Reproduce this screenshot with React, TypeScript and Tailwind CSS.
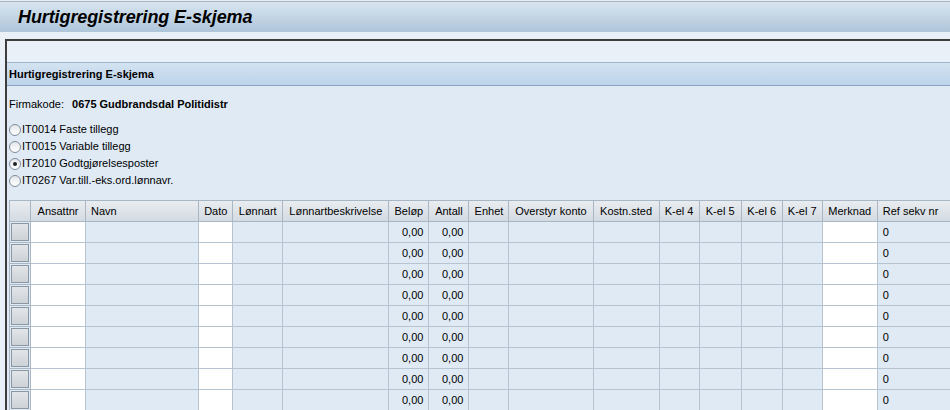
import React from "react";

const columns: { label: string; w: number; white?: boolean; num?: boolean; zero?: boolean }[] = [
  { label: "Ansattnr", w: 55, white: true },
  { label: "Navn", w: 113 },
  { label: "Dato", w: 34, white: true },
  { label: "Lønnart", w: 50 },
  { label: "Lønnartbeskrivelse", w: 106 },
  { label: "Beløp", w: 40, num: true },
  { label: "Antall", w: 40, num: true },
  { label: "Enhet", w: 40 },
  { label: "Overstyr konto", w: 84 },
  { label: "Kostn.sted", w: 66 },
  { label: "K-el 4", w: 40 },
  { label: "K-el 5", w: 42 },
  { label: "K-el 6", w: 41 },
  { label: "K-el 7", w: 40 },
  { label: "Merknad", w: 55, white: true },
  { label: "Ref sekv nr", w: 80, zero: true },
];

const options = [
  { id: "IT0014", text: "IT0014 Faste tillegg" },
  { id: "IT0015", text: "IT0015 Variable tillegg" },
  { id: "IT2010", text: "IT2010 Godtgjørelsesposter" },
  { id: "IT0267", text: "IT0267 Var.till.-eks.ord.lønnavr." },
];

const rows = Array.from({ length: 9 }, (_, i) => i);

const Radio: React.FC<{ checked?: boolean }> = ({ checked }) => (
  <span className="flex h-[12px] w-[12px] items-center justify-center rounded-full border border-[#7f8d9a] bg-gradient-to-b from-[#e3e6ea] to-white">
    {checked && <span className="h-[4px] w-[4px] rounded-full bg-[#222]" />}
  </span>
);

export default function App() {
  return (
    <div
      className="h-[410px] w-[950px] overflow-hidden bg-[#e9f0f7] text-[11px] text-black"
      style={{ fontFamily: "Tahoma, 'Liberation Sans', Arial, sans-serif" }}
    >
      {/* title bar */}
      <div className="border-t border-[#e9eef3] bg-[#e9eef3]">
        <div className="flex h-[31px] items-center border-t border-[#a9b4c0] bg-gradient-to-b from-[#d8e5f0] to-[#aec5da] pl-[18px]">
          <h1 className="text-[18px] font-bold italic tracking-[-0.1px] text-black">
            Hurtigregistrering E-skjema
          </h1>
        </div>
      </div>

      <div className="h-[7px] bg-[#e9f0f7]" />

      {/* frame */}
      <div className="ml-[5px] border-l-2 border-t-2 border-[#3d3d3d]">
        <div className="h-[21px] bg-[#e9f0f7]" />
        <div className="flex h-[24px] items-center border-y border-t-[#9db4cb] border-b-[#87a2c0] bg-gradient-to-b from-[#d3e3f1] to-[#bdd4ea] pl-[2px] font-bold">
          Hurtigregistrering E-skjema
        </div>

        <div className="bg-[#dfeaf5] pl-[2px] pt-[11px]">
          <div className="flex h-[14px] items-center">
            <span>Firmakode:</span>
            <span className="ml-[8px] font-bold">0675 Gudbrandsdal Politidistr</span>
          </div>

          <div className="mt-[12px] flex flex-col gap-[4px]">
            {options.map((o) => (
              <label key={o.id} className="flex h-[13px] items-center gap-[1px]">
                <Radio checked={o.id === "IT2010"} />
                <span>{o.text}</span>
              </label>
            ))}
          </div>

          <table className="mt-[13px] w-[949px] min-w-[949px] table-fixed border-separate border-spacing-0">
            <thead>
              <tr className="h-[22px]">
                <th className="w-[22px] border-y border-l border-r border-[#a9b6c3] bg-gradient-to-b from-[#e9edf1] to-[#d3dae1]" />
                {columns.map((c) => (
                  <th
                    key={c.label}
                    style={{ width: c.w }}
                    className="whitespace-nowrap border-y border-r border-[#a9b6c3] bg-gradient-to-b from-[#e9edf1] to-[#d3dae1] px-[5px] text-left font-normal"
                  >
                    <span className={c.label === "Navn" || c.label === "Ref sekv nr" ? "" : "block text-center"}>
                      {c.label}
                    </span>
                  </th>
                ))}
              </tr>
            </thead>
            <tbody>
              {rows.map((r) => (
                <tr key={r} className="h-[21px]">
                  <td className="border-b border-l border-r border-[#a9b6c3] bg-[#dfeaf5] p-0">
                    <div className="m-[1px] h-[18px] border border-[#8b97a3] bg-gradient-to-b from-[#e2e5e8] to-[#cdd2d7]" />
                  </td>
                  {columns.map((c) => (
                    <td
                      key={c.label}
                      className={`border-b border-r border-[#b6c4d2] px-[5px] ${c.white ? "bg-white" : "bg-[#dfeaf5]"} ${c.num ? "text-right" : "text-left"}`}
                    >
                      {c.num ? "0,00" : c.zero ? "0" : ""}
                    </td>
                  ))}
                </tr>
              ))}
            </tbody>
          </table>
        </div>
      </div>
    </div>
  );
}
